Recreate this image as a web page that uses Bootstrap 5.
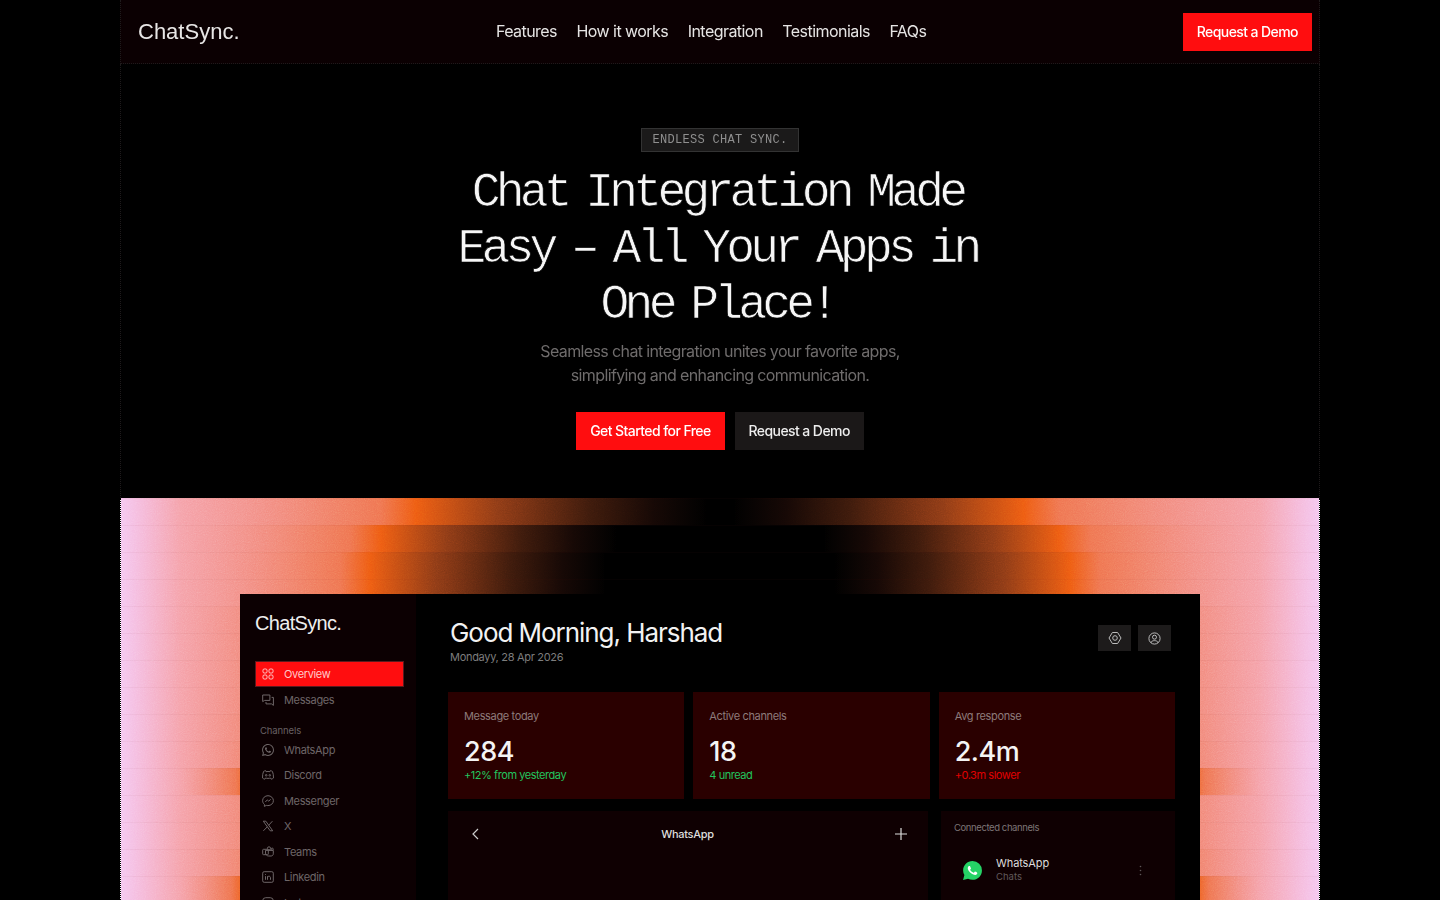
<!DOCTYPE html>
<html lang="en">
<head>
  <meta charset="UTF-8" />
  <meta name="viewport" content="width=device-width, initial-scale=1" />
  <title>ChatSync</title>
  <link href="https://cdn.jsdelivr.net/npm/bootstrap@5.3.3/dist/css/bootstrap.min.css" rel="stylesheet" />
  <style>
    html, body { height: 100%; }
    body {
      background: #000;
      color: #fff;
      font-family: Inter, "Liberation Sans", sans-serif;
      overflow: hidden;
    }
    .shell { width: 1200px; height: 900px; margin: 0 auto; }

    /* top bar */
    .topbar {
      height: 64px;
      padding: 0 7px 0 17px;
      background: #0b0002;
      border: 1px dotted #1e1a1b;
      border-width: 0 1px 1px;
    }
    .brand-name {
      padding: 0;
      font-family: "Liberation Sans", sans-serif;
      font-size: 22px;
      color: #e8e6e6;
    }
    .brand-name:hover { color: #e8e6e6; }
    .top-links { gap: 19.5px; margin-top: -2px; }
    .top-links .nav-link {
      padding: 0;
      font-size: 16px;
      letter-spacing: -0.55px;
      color: #e6e4e4;
    }
    .btn-red, .btn-dark-soft {
      height: 38px;
      padding: 0 14px;
      border: 0;
      border-radius: 0;
      font-size: 14px;
      font-weight: 500;
      letter-spacing: -0.58px;
      line-height: 38px;
      color: #fff;
    }
    .btn-red { background: #ff0d0f; }
    .btn-dark-soft { background: #1b1818; color: #eee; }
    .btn-red:hover { background: #ff0d0f; color: #fff; }
    .btn-dark-soft:hover { background: #1b1818; color: #eee; }

    /* hero */
    .hero {
      height: 434px;
      padding-top: 64px;
      border: 1px dotted #1e1a1b;
      border-width: 0 1px;
    }
    .eyebrow {
      height: 24px;
      padding: 0 10px;
      vertical-align: top;
      background: #1b1a1a;
      border: 1px solid #333;
      font-family: "Liberation Mono", monospace;
      font-size: 12px;
      letter-spacing: 0.3px;
      line-height: 23px;
      color: #8f8f8f;
    }
    .hero-title {
      margin: 13px 0 0;
      padding-right: 5px;
      font-family: "Liberation Mono", monospace;
      font-size: 48px;
      font-weight: 400;
      letter-spacing: -4.76px;
      word-spacing: -6.6px;
      line-height: 56px;
      color: #f6f6f6;
      -webkit-text-stroke: 0.7px #000;
    }
    .hero-sub {
      margin: 6px 0 0;
      font-size: 16px;
      letter-spacing: -0.62px;
      line-height: 24px;
      color: #6f6c6c;
    }
    .hero-actions { margin-top: 25px; gap: 10px; }

    /* gradient stage */
    .stage {
      height: 402px;
      padding-top: 96px;
      overflow: hidden;
      background: #fff;
      border: 1px dotted #000;
      border-width: 0 1px;
    }
    .bands { inset: 0; }
    .band { height: 27px; box-shadow: inset 0 1px 0 rgba(110, 30, 20, .045); }
    .grain { inset: 0; width: 100%; height: 100%; opacity: .3; mix-blend-mode: overlay; }

    /* dashboard mock */
    .app-frame {
      width: 960px;
      height: 400px;
      margin: 0 auto;
      background: #000;
      z-index: 1;
    }
    .side-col {
      width: 176px;
      padding: 16px 12px 0 15px;
      background: #0c0002;
    }
    .side-logo {
      margin-bottom: 24px;
      font-family: "Liberation Sans", sans-serif;
      font-size: 20px;
      letter-spacing: -0.68px;
      line-height: 27px;
      color: #eee;
    }
    .side-item {
      height: 25.5px;
      padding-left: 7px;
      gap: 10px;
      font-size: 11px;
      letter-spacing: -0.35px;
      color: #6e6668;
    }
    .side-item.on {
      height: 26px;
      background: #ff0d0f;
      box-shadow: inset 0 0 0 1px #5a1a1e;
      color: #ffc9c9;
    }
    .side-item svg { flex: none; }
    .side-head {
      margin: 11.5px 0 0 5px;
      font-size: 9.5px;
      letter-spacing: -0.1px;
      line-height: 13px;
      color: #686062;
    }
    .main-col { padding: 0 25px 0 32px; }
    .greet-row { height: 98px; padding: 23px 4px 0 2px; }
    .greet {
      margin: 0;
      font-size: 26px;
      font-weight: 400;
      letter-spacing: -1.05px;
      line-height: 32px;
      color: #f2f2f2;
    }
    .greet-date { font-size: 11px; letter-spacing: -0.3px; line-height: 16px; color: #7d7d7d; }
    .icon-pair { gap: 7px; }
    .icon-btn { width: 33px; height: 26px; background: #1d1b1b; color: #bbb; }
    .tiles { gap: 9px; }
    .tile {
      flex: 1 1 0;
      height: 107px;
      padding: 16px;
      background: #2a0000;
    }
    .tile-label { font-size: 11px; letter-spacing: -0.35px; line-height: 16px; color: #8d7b7b; }
    .tile-value { margin-top: 11px; font-size: 27px; font-weight: 500; letter-spacing: -0.5px; line-height: 33px; color: #f4f4f4; }
    .tile-note { font-size: 11px; letter-spacing: -0.45px; line-height: 14px; }
    .up { color: #22c55e; }
    .down { color: #e00000; }
    .lower { margin-top: 12px; gap: 13px; }
    .chat-box { width: 480px; height: 120px; padding: 13px 20px 0 21px; background: #0f0002; }
    .chat-title { font-size: 11px; font-weight: 500; letter-spacing: -0.3px; color: #ddd; }
    .channels-box { width: 234px; height: 120px; padding: 10px 13px 0; background: #0f0002; }
    .channels-head { font-size: 9.5px; letter-spacing: -0.4px; line-height: 14px; color: #7d7576; }
    .channel-row { margin-top: 21px; padding: 0 0 0 9px; gap: 14px; }
    .channel-name { font-size: 11px; letter-spacing: -0.1px; line-height: 14px; color: #ddd; }
    .channel-meta { font-size: 9.5px; line-height: 14px; color: #625a5b; }
    .kebab { margin-left: auto; margin-right: 20px; color: #5e5658; }
  </style>
</head>
<body>
  <div class="shell">

    <nav class="navbar topbar justify-content-between">
      <a class="navbar-brand brand-name m-0" href="#">ChatSync.</a>
      <ul class="nav top-links">
        <li class="nav-item"><a class="nav-link" href="#">Features</a></li>
        <li class="nav-item"><a class="nav-link" href="#">How it works</a></li>
        <li class="nav-item"><a class="nav-link" href="#">Integration</a></li>
        <li class="nav-item"><a class="nav-link" href="#">Testimonials</a></li>
        <li class="nav-item"><a class="nav-link" href="#">FAQs</a></li>
      </ul>
      <a class="btn btn-red" href="#">Request a Demo</a>
    </nav>

    <section class="hero text-center">
      <span class="eyebrow d-inline-block">ENDLESS CHAT SYNC.</span>
      <h1 class="hero-title">Chat Integration Made<br />Easy – All Your Apps in<br />One Place!</h1>
      <p class="hero-sub">Seamless chat integration unites your favorite apps,<br />simplifying and enhancing communication.</p>
      <div class="hero-actions d-flex justify-content-center">
        <a class="btn btn-red" href="#">Get Started for Free</a>
        <a class="btn btn-dark-soft" href="#">Request a Demo</a>
      </div>
    </section>

    <section class="stage position-relative">
      <div class="bands position-absolute" id="bands"></div>
      <svg class="grain position-absolute" xmlns="http://www.w3.org/2000/svg">
        <filter id="noise"><feTurbulence type="fractalNoise" baseFrequency="0.9" numOctaves="2" /><feColorMatrix type="saturate" values="0" /></filter>
        <rect width="100%" height="100%" filter="url(#noise)" />
      </svg>

      <div class="app-frame d-flex position-relative">
        <aside class="side-col">
          <div class="side-logo">ChatSync.</div>
          <div class="side-item on d-flex align-items-center">
            <svg width="12" height="12" viewBox="0 0 12 12" fill="none" stroke="currentColor"><rect x="1" y="1" width="4" height="4" rx="1.2" /><rect x="7" y="1" width="4" height="4" rx="1.2" /><rect x="1" y="7" width="4" height="4" rx="1.2" /><rect x="7" y="7" width="4" height="4" rx="1.2" /></svg>
            Overview
          </div>
          <div class="side-item d-flex align-items-center">
            <svg width="12" height="12" viewBox="0 0 12 12" fill="none" stroke="currentColor"><path d="M.7 1h7.2v5.4H2.6L.7 7.6zM9.6 3.4h1.8v8l-1.9-1.5H4V8" /></svg>
            Messages
          </div>
          <div class="side-head">Channels</div>
          <div class="side-item d-flex align-items-center">
            <svg width="12" height="12" viewBox="0 0 24 24" fill="currentColor"><path d="M17.472 14.382c-.297-.149-1.758-.867-2.03-.967-.273-.099-.471-.148-.67.15-.197.297-.767.966-.94 1.164-.173.199-.347.223-.644.075-.297-.15-1.255-.463-2.39-1.475-.883-.788-1.48-1.761-1.653-2.059-.173-.297-.018-.458.13-.606.134-.133.298-.347.446-.52.149-.174.198-.298.298-.497.099-.198.05-.371-.025-.52-.075-.149-.669-1.612-.916-2.207-.242-.579-.487-.5-.669-.51-.173-.008-.371-.01-.57-.01-.198 0-.52.074-.792.372-.272.297-1.04 1.016-1.04 2.479 0 1.462 1.065 2.875 1.213 3.074.149.198 2.096 3.2 5.077 4.487.709.306 1.262.489 1.694.625.712.227 1.36.195 1.871.118.571-.085 1.758-.719 2.006-1.413.248-.694.248-1.289.173-1.413-.074-.124-.272-.198-.57-.347m-5.421 7.403h-.004a9.87 9.87 0 01-5.031-1.378l-.361-.214-3.741.982.998-3.648-.235-.374a9.86 9.86 0 01-1.51-5.26c.001-5.45 4.436-9.884 9.888-9.884 2.64 0 5.122 1.03 6.988 2.898a9.825 9.825 0 012.893 6.994c-.003 5.45-4.437 9.884-9.885 9.884m8.413-18.297A11.815 11.815 0 0012.05 0C5.495 0 .16 5.335.157 11.892c0 2.096.547 4.142 1.588 5.945L.057 24l6.305-1.654a11.882 11.882 0 005.683 1.448h.005c6.554 0 11.89-5.335 11.893-11.893a11.821 11.821 0 00-3.48-8.413z" /></svg>
            WhatsApp
          </div>
          <div class="side-item d-flex align-items-center">
            <svg width="12" height="12" viewBox="0 0 12 12" fill="none" stroke="currentColor"><path d="M3.6 1.600C2.800 1.800 2.200 2 1.600 2.400 .8 4.200.4 6.400.5 9c.7.6 1.500 1 2.300 1.200l.7-1.200c1.600.5 3.400.5 5 0l.7 1.200c.8-.2 1.600-.6 2.300-1.200.1-2.600-.3-4.800-1.100-6.600-.6-.4-1.200-.6-2-.8L8 2.700c-1.300-.3-2.700-.3-4 0z" /><circle cx="4.200" cy="6.300" r=".8" /><circle cx="7.800" cy="6.300" r=".8" /></svg>
            Discord
          </div>
          <div class="side-item d-flex align-items-center">
            <svg width="12" height="12" viewBox="0 0 12 12" fill="none" stroke="currentColor"><path d="M6 .7C3 .7.6 2.900.6 5.700c0 1.500.7 2.800 1.800 3.700v2l1.900-1c.5.200 1.100.2 1.700.2 3 0 5.400-2.200 5.400-4.900S9 .7 6 .7z" /><path d="M3.300 7l2-2.100 1.400 1.200L8.700 4.400" /></svg>
            Messenger
          </div>
          <div class="side-item d-flex align-items-center">
            <svg width="12" height="12" viewBox="0 0 12 12" fill="none" stroke="currentColor"><path d="M1.300 1.200h2.500l6.900 9.600H8.200zM10.400 1.200 6.600 5.300M5.300 6.800l-3.900 4" /></svg>
            X
          </div>
          <div class="side-item d-flex align-items-center">
            <svg width="12" height="12" viewBox="0 0 12 12" fill="none" stroke="currentColor"><circle cx="7" cy="2.400" r="1.600" /><circle cx="10.200" cy="3.200" r="1.100" /><path d="M3.500 4.400h7.800v3.400c0 1.300-1 2.200-2.200 2.200H6.600C5 10 3.500 8.700 3.500 7z" /><rect x=".7" y="3.300" width="5.600" height="5.400" rx=".8" /></svg>
            Teams
          </div>
          <div class="side-item d-flex align-items-center">
            <svg width="12" height="12" viewBox="0 0 12 12" fill="none" stroke="currentColor"><rect x=".7" y=".7" width="10.600" height="10.600" rx="1.500" /><path d="M3.500 5.200v3.600M3.500 3.200v.8M5.500 8.800V5.200M5.500 6.800c0-2 3-2.200 3 0v2" /></svg>
            Linkedin
          </div>
          <div class="side-item d-flex align-items-center">
            <svg width="12" height="12" viewBox="0 0 12 12" fill="none" stroke="currentColor"><rect x=".7" y=".7" width="10.600" height="10.600" rx="3" /><circle cx="6" cy="6" r="2.400" /></svg>
            Instagram
          </div>
        </aside>

        <main class="main-col flex-grow-1">
          <div class="greet-row d-flex justify-content-between align-items-start">
            <div>
              <h2 class="greet">Good Morning, Harshad</h2>
              <div class="greet-date">Mondayy, 28 Apr 2026</div>
            </div>
            <div class="icon-pair d-flex mt-2">
              <div class="icon-btn d-flex align-items-center justify-content-center">
                <svg width="14" height="14" viewBox="0 0 14 14" fill="none" stroke="currentColor"><path d="M4.400 1.500h5.200l3.400 5.500-3.400 5.500H4.400L1 7z" stroke-linejoin="round" /><circle cx="7" cy="7" r="2.300" /></svg>
              </div>
              <div class="icon-btn d-flex align-items-center justify-content-center">
                <svg width="13" height="13" viewBox="0 0 13 13" fill="none" stroke="currentColor"><circle cx="6.500" cy="6.500" r="5.600" /><circle cx="6.500" cy="5.200" r="2" /><path d="M2.900 10.800c.6-2.900 6.600-2.900 7.200 0" /></svg>
              </div>
            </div>
          </div>

          <div class="tiles d-flex">
            <div class="tile">
              <div class="tile-label">Message today</div>
              <div class="tile-value">284</div>
              <div class="tile-note up">+12% from yesterday</div>
            </div>
            <div class="tile">
              <div class="tile-label">Active channels</div>
              <div class="tile-value">18</div>
              <div class="tile-note up">4 unread</div>
            </div>
            <div class="tile">
              <div class="tile-label">Avg response</div>
              <div class="tile-value">2.4m</div>
              <div class="tile-note down">+0.3m slower</div>
            </div>
          </div>

          <div class="lower d-flex">
            <div class="chat-box">
              <div class="d-flex justify-content-between align-items-center">
                <svg width="12" height="20" viewBox="0 0 12 20" fill="none" stroke="#ccc" stroke-width="1.200"><path d="M9 5 4 10l5 5" /></svg>
                <span class="chat-title">WhatsApp</span>
                <svg width="14" height="14" viewBox="0 0 14 14" fill="none" stroke="#ddd" stroke-width="1.200"><path d="M7 1v12M1 7h12" /></svg>
              </div>
            </div>
            <div class="channels-box">
              <div class="channels-head">Connected channels</div>
              <div class="channel-row d-flex align-items-center">
                <svg width="19" height="19" viewBox="0 0 24 24"><path fill="#25d366" d="M20.464 3.488A11.815 11.815 0 0012.05 0C5.495 0 .16 5.335.157 11.892c0 2.096.547 4.142 1.588 5.945L.057 24l6.305-1.654a11.882 11.882 0 005.683 1.448h.005c6.554 0 11.89-5.335 11.893-11.893a11.821 11.821 0 00-3.48-8.413z" /><path fill="#fff" d="M17.472 14.382c-.297-.149-1.758-.867-2.03-.967-.273-.099-.471-.148-.67.15-.197.297-.767.966-.94 1.164-.173.199-.347.223-.644.075-.297-.15-1.255-.463-2.39-1.475-.883-.788-1.48-1.761-1.653-2.059-.173-.297-.018-.458.13-.606.134-.133.298-.347.446-.52.149-.174.198-.298.298-.497.099-.198.05-.371-.025-.52-.075-.149-.669-1.612-.916-2.207-.242-.579-.487-.5-.669-.51-.173-.008-.371-.01-.57-.01-.198 0-.52.074-.792.372-.272.297-1.04 1.016-1.04 2.479 0 1.462 1.065 2.875 1.213 3.074.149.198 2.096 3.2 5.077 4.487.709.306 1.262.489 1.694.625.712.227 1.36.195 1.871.118.571-.085 1.758-.719 2.006-1.413.248-.694.248-1.289.173-1.413-.074-.124-.272-.198-.57-.347" /></svg>
                <div>
                  <div class="channel-name">WhatsApp</div>
                  <div class="channel-meta">Chats</div>
                </div>
                <svg class="kebab" width="3" height="11" viewBox="0 0 3 11" fill="currentColor"><circle cx="1.500" cy="1.500" r=".8" /><circle cx="1.500" cy="5.500" r=".8" /><circle cx="1.500" cy="9.500" r=".8" /></svg>
              </div>
            </div>
          </div>
        </main>
      </div>
    </section>
  </div>

  <script src="https://cdn.jsdelivr.net/npm/bootstrap@5.3.3/dist/js/bootstrap.bundle.min.js"></script>
  <script>
    // distance from the stage edge to the orange peak, one value per band
    const peaks = [295, 260, 249, 249, 215, 212, 208, 205, 195, 185, 130, 190, 190, 170, 125];
    const holder = document.getElementById('bands');
    peaks.forEach((p, i) => {
      const band = document.createElement('div');
      band.className = 'band';
      const tail = i === 0 ? 290 : 235;
      const left = [
        ['#f5c6f0', 0],
        ['#f5b8d8', 22],
        ['#f5a0a8', 60],
        ['#ef7350', p * 0.88],
        ['#ee5a12', p],
        ['#8c3a16', p + tail * 0.28],
        ['#3c1a0c', p + tail * 0.6],
        ['#150805', p + tail * 0.82],
        ['#000', p + tail]
      ];
      const right = left.slice().reverse();
      const stops = left.map(s => `${s[0]} ${s[1]}px`)
        .concat(right.map(s => `${s[0]} calc(100% - ${s[1]}px)`));
      band.style.background = `linear-gradient(90deg, ${stops.join(', ')})`;
      holder.appendChild(band);
    });
  </script>
</body>
</html>
